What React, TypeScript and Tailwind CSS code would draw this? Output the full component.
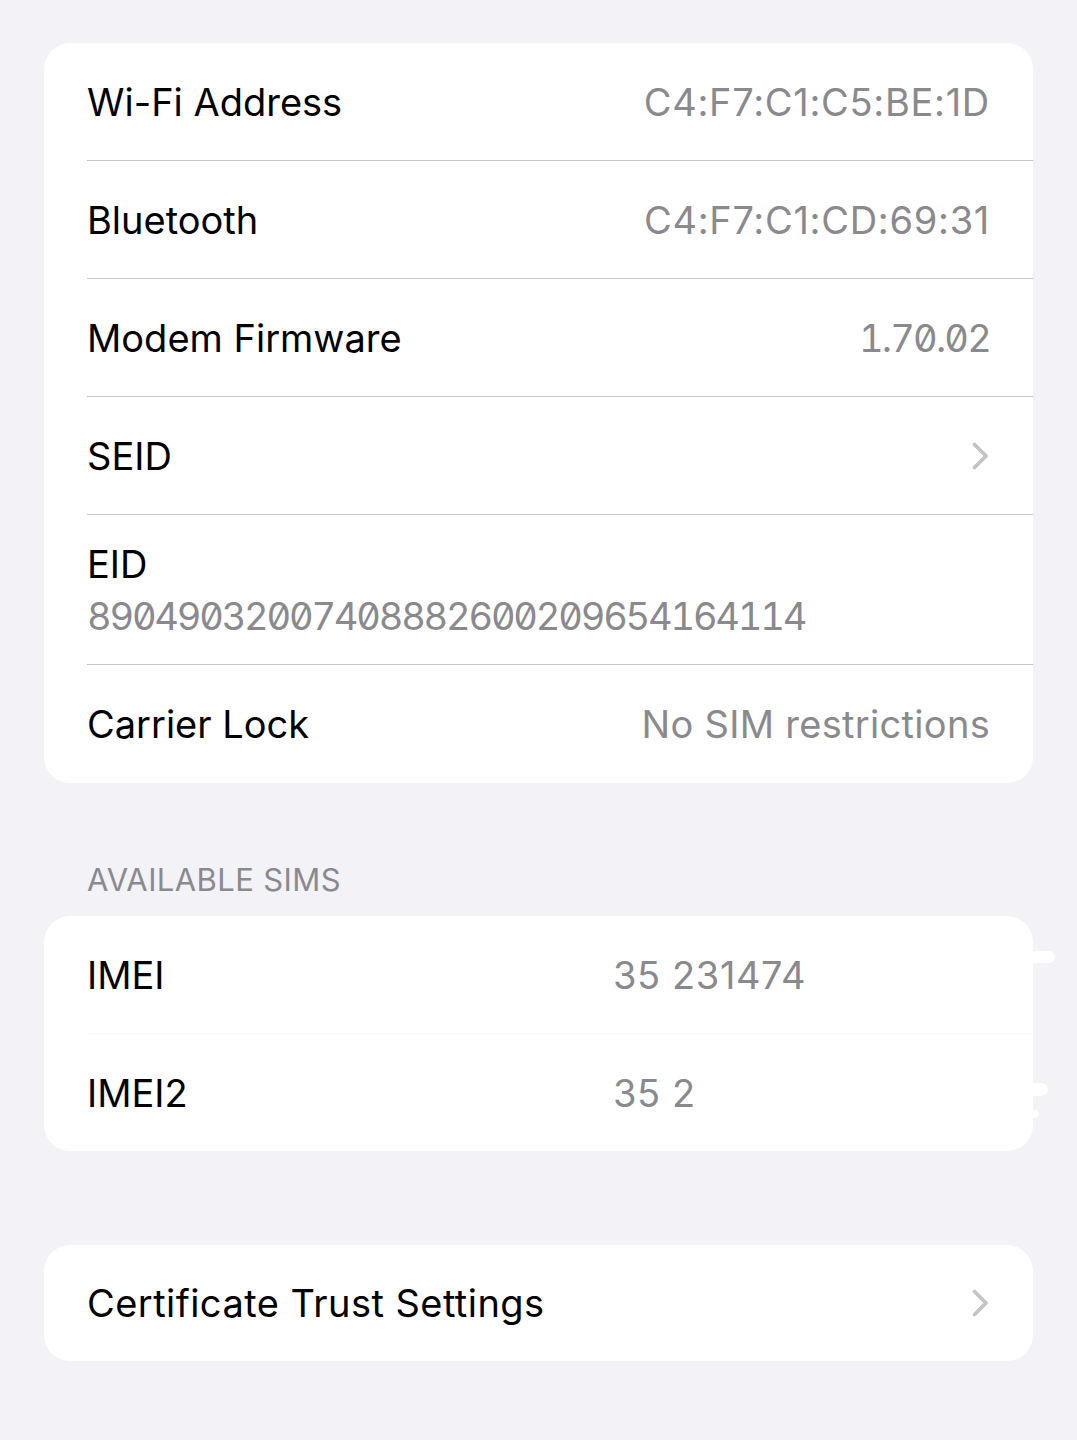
const font = { fontFamily: 'Inter, "Noto Sans", sans-serif' }

const Chevron = () => (
  <svg width="20" height="30" viewBox="0 0 20 30" fill="none" className="shrink-0">
    <path d="M4.5 3.5L16 15L4.5 26.5" stroke="#c4c4c7" strokeWidth="3.8" strokeLinecap="round" strokeLinejoin="round" />
  </svg>
)

type RowProps = {
  label: string
  value?: string
  chevron?: boolean
  sep?: boolean
  labelClass?: string
  valueClass?: string
  h?: string
}

const Row = ({ label, value, chevron, sep = true, labelClass = '', valueClass = '', h = 'h-[118px]' }: RowProps) => (
  <div className="pl-[43px]">
    <div className={`flex ${h} items-center justify-between pr-[43px] ${sep ? 'border-b border-[#c8c8cc]' : ''}`}>
      <span className={`text-[38px] leading-none text-black ${labelClass}`}>{label}</span>
      {value && <span className={`text-[38px] leading-none text-[#8a8a8e] ${valueClass}`}>{value}</span>}
      {chevron && <Chevron />}
    </div>
  </div>
)

export default function App() {
  return (
    <div className="min-h-[1440px] w-full bg-[#f2f2f7] px-[44px] pt-[43px]" style={font}>
      <div className="rounded-[26px] bg-white">
        <Row label="Wi-Fi Address" value="C4:F7:C1:C5:BE:1D" valueClass="tracking-[0.7px]" />
        <Row label="Bluetooth" value="C4:F7:C1:CD:69:31" valueClass="tracking-[0.7px]" />
        <Row label="Modem Firmware" value="1.70.02" valueClass="slashed-zero tabular-nums tracking-[-1.8px]" />
        <Row label="SEID" chevron />
        <div className="pl-[43px]">
          <div className="border-b border-[#c8c8cc] pb-[24px] pt-[25px] pr-[43px]">
            <div className="text-[38px] leading-[48px] text-black">EID</div>
            <div className="mt-[4px] text-[38px] leading-[48px] tracking-[-2.2px] text-[#8a8a8e] slashed-zero tabular-nums">
              89049032007408882600209654164114
            </div>
          </div>
        </div>
        <Row label="Carrier Lock" value="No SIM restrictions" valueClass="tracking-[0.3px]" sep={false} />
      </div>

      <div className="flex h-[133px] items-end pb-[18px] pl-[43px]">
        <span className="text-[31px] leading-[36px] tracking-[0.4px] text-[#8a8a8e]">AVAILABLE SIMS</span>
      </div>

      <div className="relative rounded-[26px] bg-white">
        <div className="pl-[43px]">
          <div className="flex h-[118px] items-center border-b border-[#f9f9fa] pr-[43px]">
            <span className="w-[526px] text-[38px] leading-none text-black">IMEI</span>
            <span className="text-[38px] leading-none tracking-[0.6px] text-[#8a8a8e]">35 231474</span>
          </div>
        </div>
        <div className="pl-[43px]">
          <div className="flex h-[117px] items-center pr-[43px]">
            <span className="w-[526px] text-[38px] leading-none text-black">IMEI2</span>
            <span className="text-[38px] leading-none tracking-[0.6px] text-[#8a8a8e]">35 2</span>
          </div>
        </div>
        <div className="absolute right-[-22px] top-[35px] h-[12px] w-[30px] rounded-full bg-white" />
        <div className="absolute right-[-15px] top-[167px] h-[13px] w-[24px] rounded-full bg-white" />
        <div className="absolute right-[-6px] top-[194px] h-[8px] w-[12px] rounded-full bg-white" />
      </div>

      <div className="mt-[94px] rounded-[26px] bg-white">
        <Row label="Certificate Trust Settings" labelClass="tracking-[0.45px]" chevron sep={false} h="h-[116px]" />
      </div>
    </div>
  )
}
